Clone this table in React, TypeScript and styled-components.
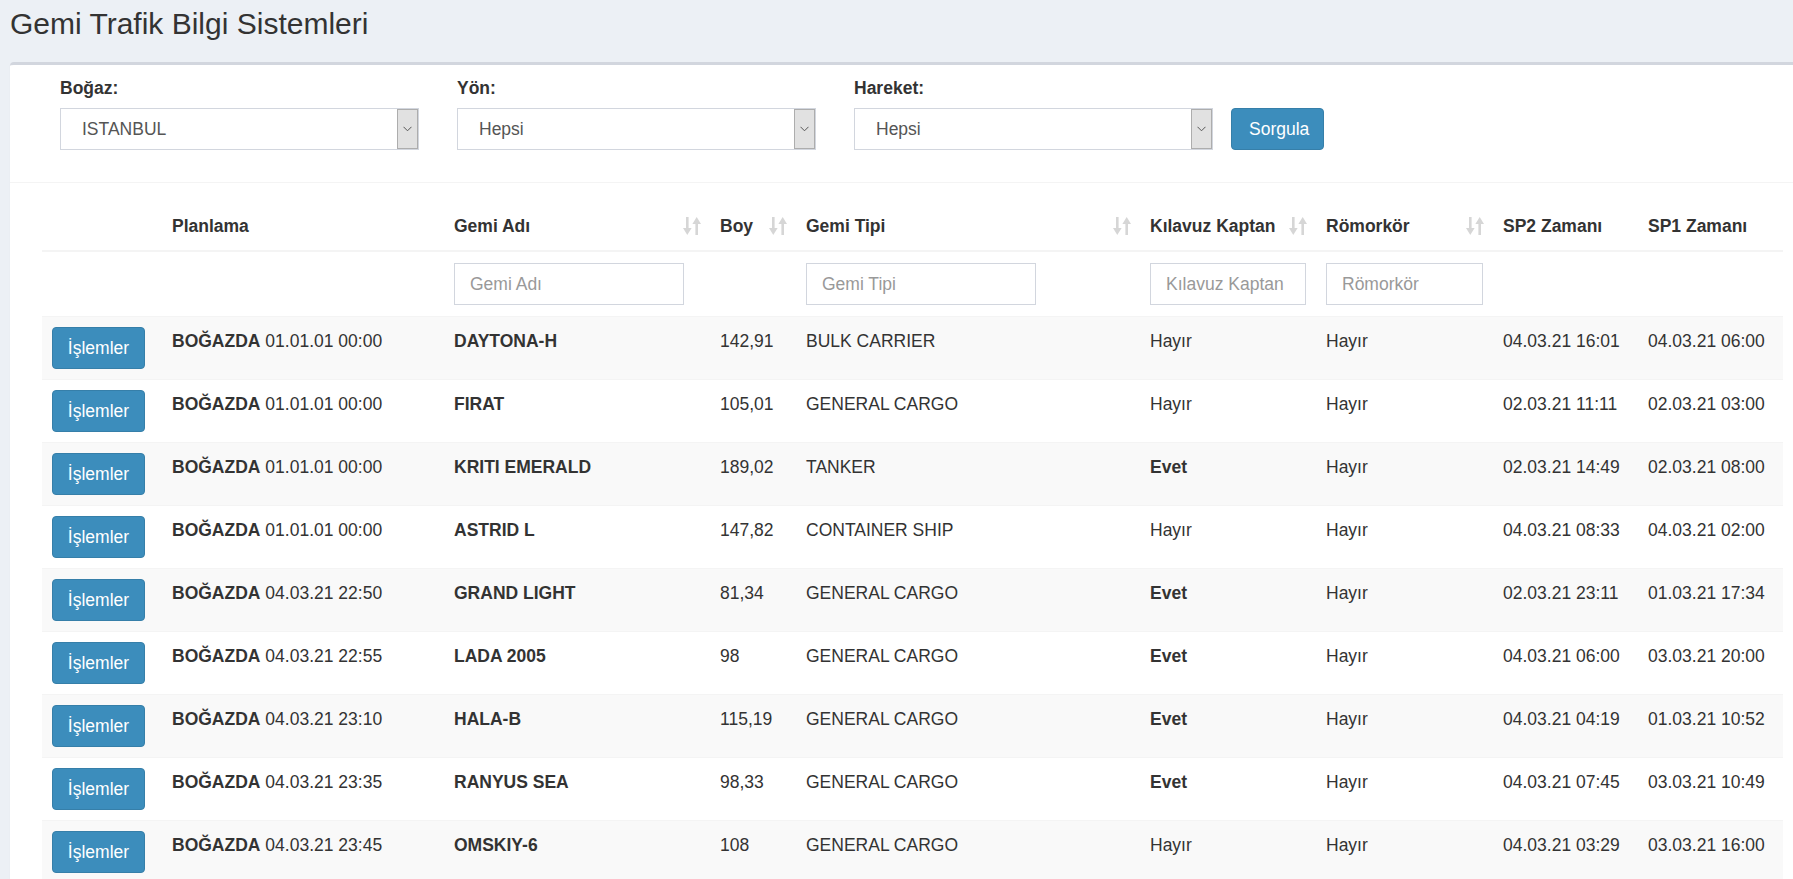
import React from 'react';
import styled, { createGlobalStyle } from 'styled-components';

const GlobalStyle = createGlobalStyle`
  html, body {
    margin: 0;
    height: 100%;
    overflow: hidden;
    background: #ecf0f5;
    font-family: "Liberation Sans", Arial, Helvetica, sans-serif;
    font-size: 17.5px;
    color: #333;
  }
  * {
    box-sizing: border-box;
  }
`;

const Page = styled.div`
  min-height: 879px;
`;

const Header = styled.header`
  padding: 7px 0 0 10px;
`;

const Title = styled.h1`
  margin: 0;
  font-size: 30px;
  line-height: 33px;
  font-weight: 400;
  color: #333;
`;

const Box = styled.section`
  margin: 22px 0 0 10px;
  background: #fff;
  border-top: 3px solid #d2d6de;
  border-radius: 4px 0 0 0;
  box-shadow: 0 1px 1px rgba(0, 0, 0, 0.1);
`;

const FilterBar = styled.div`
  display: flex;
  align-items: flex-end;
  gap: 38px;
  padding: 11px 0 32px 50px;
  border-bottom: 1px solid #f4f4f4;
`;

const FilterGroup = styled.div`
  display: flex;
  flex-direction: column;
  width: 359px;
`;

const Label = styled.label`
  font-weight: 700;
  line-height: 25px;
  margin-bottom: 7px;
`;

const SelectBox = styled.div`
  display: flex;
  align-items: center;
  height: 42px;
  border: 1px solid #d2d6de;
  padding-left: 21px;
  color: #555;
  background: #fff;
`;

const SelectValue = styled.span`
  flex: 1;
`;

const ArrowBox = styled.span`
  display: flex;
  align-items: center;
  justify-content: center;
  width: 21px;
  height: 40px;
  background: #e1e1e1;
  border: 1px solid #adadad;
`;

const Button = styled.button`
  height: 42px;
  padding: 0 17px;
  background: #3c8dbc;
  border: 1px solid #367fa9;
  border-radius: 4px;
  color: #fff;
  font-family: inherit;
  font-size: 17.5px;
  line-height: 25px;
  cursor: pointer;
`;

const QueryButton = styled(Button)`
  width: 93px;
  margin-left: -20px;
`;

const RowButton = styled(Button)`
  display: block;
  width: 93px;
  padding: 0;
`;

const TableArea = styled.div`
  padding: 21px 10px 0 32px;
`;

const Table = styled.table`
  width: 1741px;
  border-collapse: collapse;
  table-layout: fixed;
  line-height: 25px;
`;

const HeadCell = styled.th<{ $sortable?: boolean }>`
  position: relative;
  text-align: left;
  vertical-align: bottom;
  padding: 10px ${(p) => (p.$sortable ? '30px' : '10px')} 11px 10px;
  font-weight: 700;
  border-bottom: 2px solid #f4f4f4;
  white-space: nowrap;
`;

const SortIcon = styled.svg`
  position: absolute;
  right: 9px;
  bottom: 15px;
  width: 18px;
  height: 18px;
`;

const FilterCell = styled.td`
  padding: 11px 10px;
  vertical-align: top;
`;

const FilterInput = styled.input<{ $width?: number }>`
  width: ${(p) => (p.$width ? `${p.$width}px` : '100%')};
  height: 42px;
  border: 1px solid #d2d6de;
  padding: 0 15px;
  font-family: inherit;
  font-size: 17.5px;
  color: #555;
  outline: none;
  &::placeholder {
    color: #999;
  }
`;

const Row = styled.tr<{ $striped: boolean }>`
  background: ${(p) => (p.$striped ? '#f9f9f9' : '#fff')};
`;

const Cell = styled.td<{ $bold?: boolean }>`
  padding: 12px 10px 8px;
  border-top: 1px solid #f4f4f4;
  vertical-align: top;
  font-weight: ${(p) => (p.$bold ? 700 : 400)};
  white-space: nowrap;
`;

const ButtonCell = styled(Cell)`
  padding: 10px;
`;

const Chevron = () => (
  <svg width="9" height="6" viewBox="0 0 9 6">
    <path d="M0.5 0.8 L4.5 4.8 L8.5 0.8" fill="none" stroke="#555" strokeWidth="1" />
  </svg>
);

const Sort = () => (
  <SortIcon viewBox="0 0 18 18">
    <g fill="#d6d6d6">
      <rect x="3" y="0" width="2.6" height="12" />
      <polygon points="0,11 8.6,11 4.3,18" />
      <rect x="12.4" y="6" width="2.6" height="12" />
      <polygon points="9.4,7 18,7 13.7,0" />
    </g>
  </SortIcon>
);

const Select = ({ value }: { value: string }) => (
  <SelectBox>
    <SelectValue>{value}</SelectValue>
    <ArrowBox>
      <Chevron />
    </ArrowBox>
  </SelectBox>
);

const columns = [
  { title: '', width: 120 },
  { title: 'Planlama', width: 282 },
  { title: 'Gemi Adı', width: 266, sortable: true },
  { title: 'Boy', width: 86, sortable: true },
  { title: 'Gemi Tipi', width: 344, sortable: true },
  { title: 'Kılavuz Kaptan', width: 176, sortable: true },
  { title: 'Römorkör', width: 177, sortable: true },
  { title: 'SP2 Zamanı', width: 145 },
  { title: 'SP1 Zamanı', width: 145 },
];

type Ship = {
  plan: string;
  name: string;
  boy: string;
  type: string;
  pilot: string;
  tug: string;
  sp2: string;
  sp1: string;
};

const ships: Ship[] = [
  { plan: '01.01.01 00:00', name: 'DAYTONA-H', boy: '142,91', type: 'BULK CARRIER', pilot: 'Hayır', tug: 'Hayır', sp2: '04.03.21 16:01', sp1: '04.03.21 06:00' },
  { plan: '01.01.01 00:00', name: 'FIRAT', boy: '105,01', type: 'GENERAL CARGO', pilot: 'Hayır', tug: 'Hayır', sp2: '02.03.21 11:11', sp1: '02.03.21 03:00' },
  { plan: '01.01.01 00:00', name: 'KRITI EMERALD', boy: '189,02', type: 'TANKER', pilot: 'Evet', tug: 'Hayır', sp2: '02.03.21 14:49', sp1: '02.03.21 08:00' },
  { plan: '01.01.01 00:00', name: 'ASTRID L', boy: '147,82', type: 'CONTAINER SHIP', pilot: 'Hayır', tug: 'Hayır', sp2: '04.03.21 08:33', sp1: '04.03.21 02:00' },
  { plan: '04.03.21 22:50', name: 'GRAND LIGHT', boy: '81,34', type: 'GENERAL CARGO', pilot: 'Evet', tug: 'Hayır', sp2: '02.03.21 23:11', sp1: '01.03.21 17:34' },
  { plan: '04.03.21 22:55', name: 'LADA 2005', boy: '98', type: 'GENERAL CARGO', pilot: 'Evet', tug: 'Hayır', sp2: '04.03.21 06:00', sp1: '03.03.21 20:00' },
  { plan: '04.03.21 23:10', name: 'HALA-B', boy: '115,19', type: 'GENERAL CARGO', pilot: 'Evet', tug: 'Hayır', sp2: '04.03.21 04:19', sp1: '01.03.21 10:52' },
  { plan: '04.03.21 23:35', name: 'RANYUS SEA', boy: '98,33', type: 'GENERAL CARGO', pilot: 'Evet', tug: 'Hayır', sp2: '04.03.21 07:45', sp1: '03.03.21 10:49' },
  { plan: '04.03.21 23:45', name: 'OMSKIY-6', boy: '108', type: 'GENERAL CARGO', pilot: 'Hayır', tug: 'Hayır', sp2: '04.03.21 03:29', sp1: '03.03.21 16:00' },
];

export default function App() {
  return (
    <Page>
      <GlobalStyle />
      <Header>
        <Title>Gemi Trafik Bilgi Sistemleri</Title>
      </Header>
      <Box>
        <FilterBar>
          <FilterGroup>
            <Label>Boğaz:</Label>
            <Select value="ISTANBUL" />
          </FilterGroup>
          <FilterGroup>
            <Label>Yön:</Label>
            <Select value="Hepsi" />
          </FilterGroup>
          <FilterGroup>
            <Label>Hareket:</Label>
            <Select value="Hepsi" />
          </FilterGroup>
          <QueryButton>Sorgula</QueryButton>
        </FilterBar>
        <TableArea>
          <Table>
            <colgroup>
              {columns.map((c, i) => (
                <col key={i} style={{ width: c.width }} />
              ))}
            </colgroup>
            <thead>
              <tr>
                {columns.map((c, i) => (
                  <HeadCell key={i} $sortable={c.sortable}>
                    {c.title}
                    {c.sortable && <Sort />}
                  </HeadCell>
                ))}
              </tr>
              <tr>
                <FilterCell />
                <FilterCell />
                <FilterCell>
                  <FilterInput $width={230} placeholder="Gemi Adı" />
                </FilterCell>
                <FilterCell />
                <FilterCell>
                  <FilterInput $width={230} placeholder="Gemi Tipi" />
                </FilterCell>
                <FilterCell>
                  <FilterInput placeholder="Kılavuz Kaptan" />
                </FilterCell>
                <FilterCell>
                  <FilterInput placeholder="Römorkör" />
                </FilterCell>
                <FilterCell />
                <FilterCell />
              </tr>
            </thead>
            <tbody>
              {ships.map((s, i) => (
                <Row key={s.name} $striped={i % 2 === 0}>
                  <ButtonCell>
                    <RowButton>İşlemler</RowButton>
                  </ButtonCell>
                  <Cell>
                    <b>BOĞAZDA</b> {s.plan}
                  </Cell>
                  <Cell $bold>{s.name}</Cell>
                  <Cell>{s.boy}</Cell>
                  <Cell>{s.type}</Cell>
                  <Cell $bold={s.pilot === 'Evet'}>{s.pilot}</Cell>
                  <Cell>{s.tug}</Cell>
                  <Cell>{s.sp2}</Cell>
                  <Cell>{s.sp1}</Cell>
                </Row>
              ))}
            </tbody>
          </Table>
        </TableArea>
      </Box>
    </Page>
  );
}
